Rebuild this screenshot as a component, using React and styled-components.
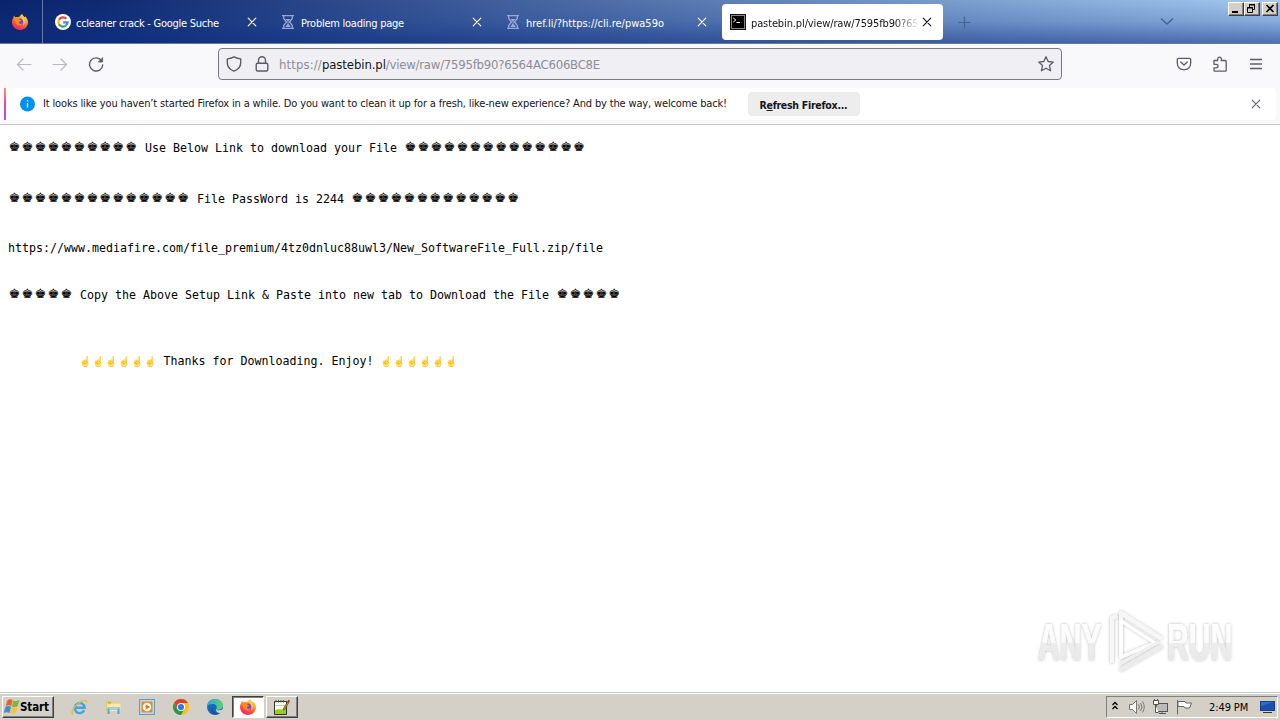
import React from "react";
import styled, { createGlobalStyle, css } from "styled-components";

const Global = createGlobalStyle`
  * { box-sizing: border-box; }
  html, body, #root { height: 100%; margin: 0; }
  body {
    overflow: hidden;
    background: #fff;
    color: #15141a;
    font: 11px/14px "DejaVu Sans Condensed", "DejaVu Sans", sans-serif;
  }
`;

const Screen = styled.div`
  width: 1280px;
  height: 720px;
  display: flex;
  flex-direction: column;
  position: relative;
`;

/* ---------- tab strip ---------- */

const TabStrip = styled.header`
  height: 44px;
  flex: none;
  display: flex;
  align-items: flex-start;
  border-bottom: 1px solid #6f7890;
  background:
    linear-gradient(to bottom, rgba(20, 60, 150, 0) 0%, rgba(20, 60, 150, 0.22) 50%, rgba(14, 46, 132, 0.58) 100%),
    linear-gradient(to right, #0a246a 0%, #0e2a72 8%, #a6caf0 100%);
`;

const ViewButton = styled.div`
  width: 43px;
  height: 43px;
  padding: 14px 0 0 12px;
  border-right: 1px solid #6678a8;
`;

const Tabs = styled.nav`
  display: flex;
  gap: 4px;
  padding: 4px 0 0 4px;
`;

const Tab = styled.div`
  width: 221px;
  height: 36px;
  display: flex;
  align-items: center;
  padding: 0 11px 0 8px;
  border-radius: 4px;
  color: ${(p) => (p.$active ? "#15141a" : "#fff")};
  background: ${(p) => (p.$active ? "#fff" : "transparent")};
`;

const TabTitle = styled.span`
  flex: 1;
  min-width: 0;
  height: 14px;
  margin: 3px 3px 0 5px;
  overflow: hidden;
  white-space: nowrap;
  letter-spacing: ${(p) => p.$track}px;
  ${(p) => p.$fade && css`mask-image: linear-gradient(to left, transparent, #000 24px);`}
`;

const NewTab = styled.div`
  padding: 16px 0 0 15px;
  color: #46628f;
`;

const TabListButton = styled.div`
  margin-left: auto;
  padding: 17px 54px 0 0;
  color: #40629a;
`;

const WindowButtons = styled.div`
  display: flex;
  padding: 2px 2px 0 0;
`;

const WindowButton = styled.div`
  width: 16px;
  height: 14px;
  margin-left: ${(p) => (p.$apart ? 2 : 0)}px;
  background: #d4d0c8;
  border: 1px solid;
  border-color: #fff #404040 #404040 #fff;
  box-shadow: inset -1px -1px 0 #808080;
`;

/* ---------- navigation bar ---------- */

const NavBar = styled.div`
  height: 44px;
  flex: none;
  display: flex;
  align-items: flex-start;
  padding: 4px 16px 0;
  background: #f9f9fb;
  color: #5b5b66;
`;

const NavButtons = styled.div`
  width: 202px;
  padding-top: 8px;
  display: flex;
  gap: 20px;
`;

const NavButton = styled.div`
  width: 16px;
  height: 16px;
  opacity: ${(p) => (p.$disabled ? 0.4 : 1)};
`;

const UrlBar = styled.div`
  width: 844px;
  height: 32px;
  display: flex;
  align-items: center;
  padding: 0 7px;
  border: 1px solid #77777f;
  border-radius: 4px;
  background: #f0f0f4;
`;

const Url = styled.div`
  flex: 1;
  margin: 1px 0 0 9px;
  font-size: 13px;
  line-height: 16px;
  color: #8c8c94;
  white-space: nowrap;
  letter-spacing: -0.23px;
`;

const Scheme = styled.span`letter-spacing: 0.12px;`;
const Domain = styled.span`
  color: #15141a;
  letter-spacing: -0.09px;
`;

const Gap = styled.span`width: 12px;`;

const ToolButtons = styled.div`
  margin-left: auto;
  padding-top: 8px;
  display: flex;
  gap: 20px;
`;

/* ---------- notification ---------- */

const NoticeArea = styled.div`
  height: 37px;
  flex: none;
  padding: 0 4px;
  background: #f9f9fb;
  border-bottom: 1px solid #c8c8cc;
`;

const Notice = styled.div`
  height: 32px;
  display: flex;
  align-items: center;
  padding: 0 15px 0 14px;
  background: linear-gradient(#ff9a56, #f0489c 45%, #9059ff) left / 2px 100% no-repeat #fff;
  border-radius: 0 4px 4px 0;
  color: #15141a;
`;

const NoticeText = styled.span`
  margin: 0 21px 0 8px;
  white-space: nowrap;
  letter-spacing: -0.149px;
`;

const RefreshButton = styled.button`
  width: 112px;
  height: 24px;
  padding: 1px 1px 0 0;
  border: 0;
  border-radius: 4px;
  background: #ededee;
  color: #15141a;
  font: bold 10.5px/14px "DejaVu Sans Condensed", "DejaVu Sans", sans-serif;
  letter-spacing: -0.27px;
  white-space: nowrap;
`;

const NoticeClose = styled.div`
  margin-left: auto;
  color: #5b5b66;
`;

/* ---------- page ---------- */

const Page = styled.main`
  flex: 1;
  padding: 15px 8px 0;
  color: #000;
  font: 11.63px/16px "DejaVu Sans Mono", monospace;
`;

const Line = styled.p`
  height: 16px;
  margin: 0 0 ${(p) => p.$after || 0}px;
  padding-left: ${(p) => p.$indent || 0}px;
  display: flex;
  white-space: pre;
`;

const Crowns = styled.span`
  width: ${(p) => p.$n * 13}px;
  padding-left: 0.6px;
  font: 13px/14px "DejaVu Sans", sans-serif;
  letter-spacing: 1.31px;
`;

const Fingers = styled.span`
  width: 77.5px;
  display: grid;
  grid-template-columns: repeat(6, 13px);
  font: 10px/17px "Noto Color Emoji", sans-serif;
  filter: brightness(1.12);
  opacity: 0.8;
`;

const Watermark = styled.svg`
  position: absolute;
  left: 1030px;
  top: 604px;
`;

/* ---------- taskbar ---------- */

const Taskbar = styled.footer`
  height: 28px;
  flex: none;
  display: flex;
  align-items: flex-start;
  padding: 2px 2px 0;
  background: #d4d0c8;
  border-top: 1px solid #c3cbd0;
  box-shadow: inset 0 1px 0 #fff;
`;

const raised = css`
  border: 1px solid;
  border-color: #fff #404040 #404040 #fff;
  box-shadow: inset -1px -1px 0 #808080;
`;

const StartButton = styled.div`
  width: 52px;
  height: 22px;
  margin-top: 1px;
  display: flex;
  align-items: center;
  ${raised}
  color: #000;
  font-weight: bold;
  font-size: 11.5px;
  letter-spacing: -0.1px;
`;

const Launchers = styled.div`
  display: flex;
  padding-left: 9px;
  margin-top: 1px;
`;

const Launcher = styled.div`
  width: 33.8px;
  height: 22px;
  display: flex;
  align-items: center;
  justify-content: center;
`;

const Task = styled.div`
  width: 32px;
  height: 22px;
  margin: 1px 2px 0 0;
  display: flex;
  align-items: center;
  justify-content: center;
  ${(p) => p.$pressed ? css`
    background: #fff;
    border: 1px solid;
    border-color: #404040 #fff #fff #404040;
    box-shadow: inset 1px 1px 0 #808080;
  ` : raised}
`;

const Tray = styled.div`
  margin-left: auto;
  width: 172px;
  height: 22px;
  margin-top: 1px;
  display: flex;
  align-items: center;
  padding-left: 4px;
  border: 1px solid;
  border-color: #808080 #fff #fff #808080;
  color: #000;
`;

const Clock = styled.span`
  width: 41px;
  margin: 1px 10px 0 16px;
  letter-spacing: -0.1px;
  white-space: nowrap;
`;

const TrayItem = styled.span`
  display: flex;
  margin-left: ${(p) => p.$ml || 0}px;
`;

/* ---------- icons ---------- */

const Stroke = ({ size = 16, w = 1.2, children }) => (
  <svg width={size} height={size} viewBox={`0 0 ${size} ${size}`} fill="none" stroke="currentColor" strokeWidth={w} strokeLinecap="round" strokeLinejoin="round" display="block">
    {children}
  </svg>
);

const Cross = () => <Stroke size={10} w={1.1}><path d="M1.2 1.2l7.6 7.6M8.8 1.2L1.2 8.8" /></Stroke>;

const Firefox = ({ id, size = 16 }) => (
  <svg width={size} height={size} viewBox="0 0 16 16" display="block">
    <defs>
      <linearGradient id={id} x1="0.8" y1="0" x2="0.3" y2="1">
        <stop offset="0" stopColor="#fff04a" />
        <stop offset="0.35" stopColor="#ffa02c" />
        <stop offset="0.7" stopColor="#ff4a3c" />
        <stop offset="1" stopColor="#e8207c" />
      </linearGradient>
    </defs>
    <path fill={`url(#${id})`} d="M10.2 0c.4 1.600 1.500 2.300 2.500 3.300.4-.2.4-.7.3-1.100C15 3.900 16 6.200 16 8.300 16 12.600 12.500 16 8.100 16S0 12.600 0 8.300C0 6.500.6 5 1.400 3.800c0-.9.3-1.700.7-2.200.2.700.6 1.200 1.200 1.600.8-.3 1.700-.2 2.400.1C6.400 2.700 7.200 2.500 8 2.500 8.200 1.500 9.100.5 10.200 0z" />
    <circle cx="8.200" cy="8" r="3.400" fill="#7a3fe0" />
    <path fill="#ff8a1e" d="M2.600 4.500c1.500-.8 3.300-.3 4.600 1 .6.500 1.500.5 2.100.7-.3 1-1.400 1.200-2 1.600-.7.600-.4 1.700.6 2 1 .3 1.900-.3 2.700-.4-.5 1.500-2 2.300-3.500 2.200-3.200-.2-4.500-3.900-4.500-7.100z" />
    <path fill="#ffd63a" d="M9.600 2.200c1.900 1.200 3.500 3.600 3.100 6-.2 1.300-.8 2.300-1.700 3 .6-1.500.8-3 .2-4.400-.6-1.500-1.900-2.600-1.600-4.600z" />
  </svg>
);

const Google = () => (
  <svg width="16" height="16" viewBox="0 0 16 16" display="block">
    <circle cx="8" cy="8" r="8" fill="#fff" />
    <g fill="none" strokeWidth="2.200">
      <path stroke="#ea4335" d="M4 5.700A4.600 4.600 0 0 1 11.300 4.800" />
      <path stroke="#fbbc05" d="M4 5.700a4.700 4.700 0 0 0 0 4.600" />
      <path stroke="#34a853" d="M4 10.300a4.600 4.600 0 0 0 7 1.200" />
      <path stroke="#4285f4" d="M11 11.500A4.600 4.600 0 0 0 12.600 8.300H8.200" />
    </g>
  </svg>
);

const Hourglass = () => (
  <svg width="16" height="16" viewBox="0 0 16 16" display="block" fill="none" stroke="#98a9d4" strokeWidth="1.300">
    <path d="M2 1.600h12M2 14.400h12" />
    <path d="M3.700 2v2.500L6.500 8l-2.800 3.500V14M12.300 2v2.500L9.500 8l2.800 3.500V14" />
    <path fill="#98a9d4" stroke="none" d="M5.500 5h5L8.400 7.500v2L10.700 13H5.300l2.300-3.500v-2z" />
  </svg>
);

const Terminal = () => (
  <svg width="16" height="16" viewBox="0 0 16 16" display="block">
    <rect x="0.500" y="0.500" width="15" height="15" fill="#000" stroke="#111" />
    <rect x="1.500" y="1.500" width="13" height="13" fill="#000" stroke="#888" />
    <path d="M3.300 4l2.500 2-2.500 2M6.500 8.500h3.500" fill="none" stroke="#fff" />
  </svg>
);

const WindowsFlag = () => (
  <svg width="17" height="16" viewBox="0 0 17 16">
    <path fill="#e8612c" d="M4.500 1.200C6.300 0 8.100.1 9.700 1L8.200 7c-1.700-.9-3.600-.9-5.500 0z" />
    <path fill="#7dba3c" d="M10.300 1.400c1.900.9 3.800.8 6.200-.5l-1.700 6.200c-2.100 1.300-4 1.300-6 .3z" />
    <path fill="#3f8fd8" d="M2.400 7.800c1.900-1.100 3.700-1 5.600-.1l-1.500 6.200c-1.700-1-3.700-1-5.800.2z" />
    <path fill="#f8c13a" d="M8.600 8.100c1.900.9 3.800.7 5.900-.3l-1.600 5.900c-2.100 1.200-4 1.100-5.800.2z" />
  </svg>
);

const Explorer = () => (
  <svg width="17" height="17" viewBox="0 0 17 17" fill="none">
    <path d="M13.200 11.300A5 5 0 1 1 13.700 8.800H4.600" stroke="#3fa4e2" strokeWidth="2.400" />
    <path d="M1.700 15.500C-.6 13 4 6 9 3.200 12.500 1 16.500.3 15.500 4.200" stroke="#e9b93a" strokeWidth="1.300" />
  </svg>
);

const Folder = () => (
  <svg width="17" height="16" viewBox="0 0 17 16">
    <path fill="#e9c864" d="M1 2h5l1 1.500h8V12H1z" />
    <path fill="#fbe9a5" d="M2 4.500h13.500V12H2z" />
    <path fill="#8cc152" d="M3 3h3v1.500H3z" />
    <path d="M3.500 15V9.500h10V15" fill="none" stroke="#57a9d8" strokeWidth="2.200" />
    <path d="M3.500 9.500h10" stroke="#9fd4ef" strokeWidth="1.500" />
  </svg>
);

const Player = () => (
  <svg width="16" height="16" viewBox="0 0 16 16">
    <rect x="0.500" y="0.500" width="15" height="15" fill="#b8daf0" stroke="#5f9ccc" />
    <rect x="2.500" y="2.500" width="11" height="11" fill="#f08a1d" />
    <circle cx="8" cy="8" r="4.300" fill="#fff" />
    <path d="M6.600 5.300v5.400L11 8z" fill="#e87512" />
  </svg>
);

const Chrome = () => (
  <svg width="16" height="16" viewBox="0 0 16 16">
    <circle cx="8" cy="8" r="8" fill="#fbc116" />
    <path fill="#e33b2e" d="M1.070 4A8 8 0 0 1 14.930 4H8L4.540 10z" />
    <path fill="#269c4a" d="M1.070 4A8 8 0 0 0 8 16l3.460-6H4.540z" />
    <circle cx="8" cy="8" r="4" fill="#fff" />
    <circle cx="8" cy="8" r="3.100" fill="#2f78e6" />
  </svg>
);

const Edge = () => (
  <svg width="16" height="16" viewBox="0 0 16 16">
    <defs>
      <linearGradient id="edgeTop" x1="0" x2="1"><stop offset="0" stopColor="#2aa9e0" /><stop offset="1" stopColor="#5fd36a" /></linearGradient>
    </defs>
    <circle cx="8" cy="8" r="8" fill="#1668b8" />
    <path fill="url(#edgeTop)" d="M0 8C.4 3.300 4 0 8.300 0 13 0 16 3.300 16 6.600c0 2.600-2 4.200-4.300 4.200-1.800 0-2.700-.7-2.300-1.400C10.600 7.300 8.800 5 6 5 3 5 .6 6.300 0 8z" />
    <path fill="#d4d0c8" d="M9.400 9.400c-.4.900.6 1.900 2.800 1.900 1.600 0 3-.5 4.200-1.500-.5 2-1.300 3.100-2.700 4.100-3 .4-5.500-1.300-4.300-4.500z" />
    <path fill="#1b4f9c" d="M5.800 7.500c-1.600 3 1.200 7.200 6.200 6.800C7 17.500 1.500 14 5.800 7.500z" />
  </svg>
);

const Notepad = () => (
  <svg width="18" height="17" viewBox="0 0 18 17">
    <path d="M1.500 2.500h12v13h-12z" fill="#fbfff0" stroke="#333" />
    <path d="M3 1v2.500M5.500 1v2.500M8 1v2.500M10.500 1v2.500" stroke="#555" />
    <path d="M2.500 6.500h10" stroke="#b8d4b0" />
    <path d="M2 15v-3.500c3-3 6 1 11-2.500v6z" fill="#96cf1e" />
    <path d="M10 10.500l5-8.500 1.200.8-4.700 8z" fill="#f0a030" stroke="#4a2a10" strokeWidth="0.700" />
    <path d="M15 1.500l1.500 1" stroke="#c02020" strokeWidth="2" />
  </svg>
);

const tabs = [
  { title: "ccleaner crack - Google Suche", icon: <Google />, track: -0.26 },
  { title: "Problem loading page", icon: <Hourglass />, track: -0.25 },
  { title: "href.li/?https://cli.re/pwa59o", icon: <Hourglass />, track: 0 },
  { title: "pastebin.pl/view/raw/7595fb90?65", icon: <Terminal />, track: -0.12, active: true },
];

const CrownRun = ({ n }) => <Crowns $n={n}>{"♚".repeat(n)}</Crowns>;
const FingerRun = () => (
  <Fingers>{Array.from({ length: 6 }, (_, i) => <span key={i}>☝</span>)}</Fingers>
);

export default function App() {
  return (
    <Screen>
      <Global />
      <TabStrip>
        <ViewButton><Firefox id="ffMenu" /></ViewButton>
        <Tabs>
          {tabs.map((t) => (
            <Tab key={t.title} $active={t.active}>
              {t.icon}
              <TabTitle $track={t.track} $fade={t.active}>{t.title}</TabTitle>
              <Cross />
            </Tab>
          ))}
        </Tabs>
        <NewTab><Stroke size={13} w={1.2}><path d="M6.500 1v11M1 6.500h11" /></Stroke></NewTab>
        <TabListButton>
          <Stroke size={14} w={1.5}><path d="M1.500 2l5.500 5 5.500-5" /></Stroke>
        </TabListButton>
        <WindowButtons>
          <WindowButton>
            <svg width="14" height="12" display="block"><path d="M3 9h6" stroke="#000" strokeWidth="2" /></svg>
          </WindowButton>
          <WindowButton>
            <svg width="14" height="12" display="block" fill="none" stroke="#000"><path d="M4.500 5V1.500h5v5H8M4 2h6M2.500 4.500h5v5h-5zM2 5h6" /></svg>
          </WindowButton>
          <WindowButton $apart>
            <svg width="14" height="12" display="block"><path d="M3.500 2l7 7M10.500 2l-7 7" stroke="#000" strokeWidth="1.600" /></svg>
          </WindowButton>
        </WindowButtons>
      </TabStrip>

      <NavBar>
        <NavButtons>
          <NavButton $disabled><Stroke w={1.2}><path d="M15 8.500H1.500M7 3L1.500 8.500 7 14" /></Stroke></NavButton>
          <NavButton $disabled><Stroke w={1.2}><path d="M1 8.500h13.500M9 3l5.500 5.500L9 14" /></Stroke></NavButton>
          <NavButton>
            <Stroke w={1.4}><path d="M13.500 4.600A6.600 6.600 0 1 0 14.700 9" /><path d="M14.600 2v4h-4z" fill="currentColor" strokeWidth="0.800" /></Stroke>
          </NavButton>
        </NavButtons>
        <UrlBar>
          <Stroke w={1.4}><path d="M8 .9c2 1.200 4.300 1.900 6.700 2v3.600c0 4-2.700 7.200-6.700 8.700-4-1.500-6.700-4.700-6.700-8.700V2.900C3.700 2.800 6 2.100 8 .9z" /></Stroke>
          <Gap />
          <Stroke w={1.4}><rect x="2.200" y="7.200" width="11.600" height="7.800" rx="1.500" /><path d="M4.500 7V4.300a3.500 3.500 0 0 1 7 0V7" /></Stroke>
          <Url><Scheme>https://</Scheme><Domain>pastebin.pl</Domain>/view/raw/7595fb90?6564AC606BC8E</Url>
          <Stroke w={1.3}><path d="M8 .8l2.200 4.700 5.100.6-3.800 3.500 1.100 5.200L8 12.200l-4.600 2.600 1.100-5.200L.7 6.100l5.100-.6z" /></Stroke>
        </UrlBar>
        <ToolButtons>
          <Stroke w={1.3}><path d="M2.500 2.300h11c.7 0 1.200.5 1.200 1.200v3.700a6.700 6.700 0 0 1-13.400 0V3.500c0-.7.5-1.200 1.200-1.200z" /><path d="M4.800 6L8 9l3.200-3" /></Stroke>
          <Stroke w={1.3}><path d="M2 4.500h3.700V3a1.800 1.800 0 0 1 3.600 0v1.500h3.900c.6 0 1 .4 1 1v8.700c0 .6-.4 1-1 1H3c-.6 0-1-.4-1-1v-2.400h2.300a1.700 1.700 0 0 0 0-3.500H2z" /></Stroke>
          <Stroke w={1.3}><path d="M2.500 3.500h11M2.500 8h11M2.500 12.500h11" /></Stroke>
        </ToolButtons>
      </NavBar>

      <NoticeArea>
        <Notice>
          <svg width="17" height="16" viewBox="0 0 17 16">
            <circle cx="9.500" cy="8" r="7.500" fill="#0090ed" />
            <path d="M9.500 7v4.500M9.500 4v1.500" stroke="#fff" strokeWidth="1.200" />
          </svg>
          <NoticeText>
            It looks like you haven’t started Firefox in a while. Do you want to clean it up for a fresh, like-new experience? And by the way, welcome back!
          </NoticeText>
          <RefreshButton>R<u>e</u>fresh Firefox...</RefreshButton>
          <NoticeClose><Cross /></NoticeClose>
        </Notice>
      </NoticeArea>

      <Page>
        <Line $after={35}><CrownRun n={10} /> Use Below Link to download your File <CrownRun n={14} /></Line>
        <Line $after={33}><CrownRun n={14} /> File PassWord is 2244 <CrownRun n={13} /></Line>
        <Line $after={31}>https://www.mediafire.com/file_premium/4tz0dnluc88uwl3/New_SoftwareFile_Full.zip/file</Line>
        <Line $after={50}><CrownRun n={5} /> Copy the Above Setup Link &amp; Paste into new tab to Download the File <CrownRun n={5} /></Line>
        <Line $indent={71}><FingerRun /> Thanks for Downloading. Enjoy! <FingerRun /></Line>
      </Page>

      <Watermark width="240" height="76" viewBox="0 0 240 76">
        <defs>
          <linearGradient id="fadeText" x1="0" y1="0" x2="0" y2="1">
            <stop offset="0" stopColor="#fff" />
            <stop offset="0.500" stopColor="#fbfbfb" />
            <stop offset="0.520" stopColor="#ededed" />
            <stop offset="1" stopColor="#e6e6e6" />
          </linearGradient>
          <filter id="halo" x="-20%" y="-20%" width="140%" height="140%">
            <feDropShadow dx="0" dy="0" stdDeviation="1.500" floodColor="#000" floodOpacity="0.300" />
          </filter>
        </defs>
        <g filter="url(#halo)" fill="url(#fadeText)" fontFamily="Liberation Sans" fontWeight="bold" fontSize="51">
          <text transform="translate(8 56) scale(0.59 1)">ANY</text>
          <text transform="translate(137 56) scale(0.59 1)">RUN</text>
        </g>
        <g filter="url(#halo)" fill="none" stroke="#f7f7f7" strokeWidth="4" strokeLinejoin="round">
          <path d="M82 59V14l5-2" />
          <path d="M91 53V9l41 26" />
          <path d="M91 53V17l34 22z" stroke="#fff" strokeWidth="3" />
          <path d="M90 66L132 42" stroke="#ececec" />
          <path d="M90 60l38-22" stroke="#efefef" strokeWidth="3" />
        </g>
      </Watermark>

      <Taskbar>
        <StartButton><WindowsFlag />Start</StartButton>
        <Launchers>
          {[Explorer, Folder, Player, Chrome, Edge].map((Icon, i) => <Launcher key={i}><Icon /></Launcher>)}
        </Launchers>
        <Task $pressed><Firefox id="ffTask" /></Task>
        <Task><Notepad /></Task>
        <Tray>
          <TrayItem>
            <svg width="8" height="12" fill="none" stroke="#000" strokeWidth="1.300"><path d="M1.500 4L4 1.500 6.500 4M1.500 8L4 5.500 6.500 8" /></svg>
          </TrayItem>
          <TrayItem $ml={9}>
            <svg width="17" height="16" fill="#fff" stroke="#777"><path d="M1.500 5.500h3l4-4v13l-4-4h-3z" /><path fill="none" d="M10.500 5.500q2 2.500 0 5M12.500 4q3 4 0 8M14.500 2.500q3.500 5.500 0 11" /></svg>
          </TrayItem>
          <TrayItem $ml={7}>
            <svg width="17" height="16" fill="#fff" stroke="#555"><rect x="4.500" y="4.500" width="11" height="8" fill="#bbb" /><path d="M7 14.500h7M10 12.500v2" /><path d="M1.500 1.500h5v4h-5zM3.500 5.500v8h3M2.500 0v2M5.500 0v2" /></svg>
          </TrayItem>
          <TrayItem $ml={7}>
            <svg width="17" height="16" fill="#fff" stroke="#666"><path d="M1.500 1v14.500M2 2.500h7l1 1.500h5.500l-2 5H9L8 7.500H2z" /></svg>
          </TrayItem>
          <Clock>2:49 PM</Clock>
          <svg width="15" height="14"><rect x="0.500" y="1.500" width="14" height="9" fill="#2a6fd0" stroke="#1d3f80" /><path d="M1 6l13-4v8H1z" fill="#1c50b0" /><path d="M3 12.500h9" stroke="#333" /></svg>
        </Tray>
      </Taskbar>
    </Screen>
  );
}
